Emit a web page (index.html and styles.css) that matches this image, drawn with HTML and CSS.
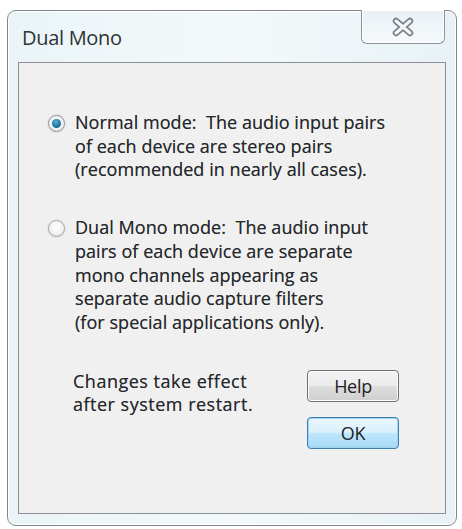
FILE: index.html
```html
<!DOCTYPE html>
<html>
<head>
<meta charset="utf-8">
<link rel="stylesheet" href="styles.css">
</head>
<body>
<div class="window">
  <div class="titlebar">
    <span class="title">Dual Mono</span>
    <div class="close">
      <svg width="26" height="20" viewBox="0 0 26 20">
        <path d="M6 4 L20 16 M20 4 L6 16" stroke="#7a8087" stroke-width="6.5" stroke-linecap="round" fill="none"/>
        <path d="M6 4 L20 16 M20 4 L6 16" stroke="#f4f6f8" stroke-width="3" stroke-linecap="round" fill="none"/>
      </svg>
    </div>
  </div>
  <div class="client">
    <div class="option">
      <span class="radio checked"><span class="dot"></span></span>
      <p class="label">Normal mode:&nbsp; The audio input pairs<br>of each device are stereo pairs<br>(recommended in nearly all cases).</p>
    </div>
    <div class="option second">
      <span class="radio"></span>
      <p class="label">Dual Mono mode:&nbsp; The audio input<br>pairs of each device are separate<br>mono channels appearing as<br>separate audio capture filters<br>(for special applications only).</p>
    </div>
    <div class="footer">
      <p class="note">Changes take effect<br>after system restart.</p>
      <div class="buttons">
        <button class="btn">Help</button>
        <button class="btn default">OK</button>
      </div>
    </div>
  </div>
</div>
</body>
</html>
```
FILE: styles.css
```css
html, body {
  margin: 0;
  padding: 0;
  background: #ffffff;
}
body {
  width: 462px;
  height: 529px;
  overflow: hidden;
  font-family: "Open Sans", "Noto Sans", sans-serif;
}
.window {
  box-sizing: border-box;
  margin: 10px 0 0 7px;
  width: 450px;
  height: 516px;
  border: 1px solid #7f868c;
  border-radius: 9px;
  background: linear-gradient(90deg, #eaf4f7 0%, #f3f9fb 50%, #e8f2f6 100%);
  padding: 0 10px 11px 10px;
  display: flex;
  flex-direction: column;
  box-shadow: inset 0 0 0 1px #ffffff;
}
.titlebar {
  height: 51px;
  display: flex;
  align-items: flex-start;
  justify-content: space-between;
  flex-shrink: 0;
}
.title {
  margin-top: 13px;
  margin-left: 4px;
  font-size: 20px;
  color: #2f3336;
  letter-spacing: -0.3px;
}
.close {
  box-sizing: border-box;
  width: 84px;
  height: 34px;
  margin-top: -1px;
  margin-right: 1px;
  border: 1px solid #8d949a;
  border-top: none;
  border-radius: 0 0 6px 6px;
  background: linear-gradient(180deg, #e9f1f5 0%, #f5f9fb 100%);
  box-shadow: inset 0 0 0 1px #ffffff;
  display: flex;
  align-items: center;
  justify-content: center;
}
.client {
  flex: 1;
  box-sizing: border-box;
  border: 1px solid #8a9095;
  background: #f0f0f0;
  padding-top: 48px;
  padding-left: 29px;
  display: flex;
  flex-direction: column;
}
.option {
  display: flex;
  align-items: flex-start;
}
.option.second {
  margin-top: 34px;
}
.radio {
  box-sizing: border-box;
  width: 17px;
  height: 17px;
  border-radius: 50%;
  border: 1px solid #a4a8ac;
  background: radial-gradient(circle at 50% 40%, #ffffff 0%, #f2f2f2 55%, #d8d8d8 100%);
  margin-top: 4px;
  margin-right: 10px;
  flex-shrink: 0;
  display: flex;
  align-items: center;
  justify-content: center;
  box-shadow: 0 0 2px rgba(160, 170, 180, 0.5);
}
.radio.checked {
  border-color: #8e9399;
}
.dot {
  width: 9px;
  height: 9px;
  border-radius: 50%;
  background: radial-gradient(circle at 45% 35%, #5fb3d4 0%, #1f7ea6 50%, #0f4f6e 100%);
}
.label {
  margin: 0;
  font-size: 18px;
  line-height: 23.7px;
  color: #26292c;
  letter-spacing: 0.05px;
  text-shadow: 0 0 0.4px rgba(38, 41, 44, 0.6);
}
.footer {
  margin-top: 35px;
  display: flex;
  align-items: flex-start;
}
.note {
  margin: 0 0 0 25px;
  font-size: 18px;
  line-height: 23px;
  color: #26292c;
  letter-spacing: 0.5px;
  width: 234px;
  text-shadow: 0 0 0.4px rgba(38, 41, 44, 0.6);
}
.buttons {
  display: flex;
  flex-direction: column;
  gap: 15px;
  margin-top: 0;
}
.btn {
  box-sizing: border-box;
  width: 92px;
  height: 32px;
  border: 1px solid #707070;
  border-radius: 4px;
  background: linear-gradient(180deg, #f4f4f4 0%, #ebebeb 48%, #dddddd 52%, #cfcfcf 100%);
  box-shadow: inset 0 0 0 1px #fbfbfb;
  font-family: "Open Sans", "Noto Sans", sans-serif;
  font-size: 18px;
  color: #1e2124;
  letter-spacing: -0.3px;
  padding: 0;
}
.btn.default {
  border-color: #3c7fb1;
  background: linear-gradient(180deg, #eaf6fd 0%, #d9f0fc 48%, #bee6fd 52%, #a7d9f5 100%);
  box-shadow: inset 0 0 0 1px #9ed6f2;
}
```
